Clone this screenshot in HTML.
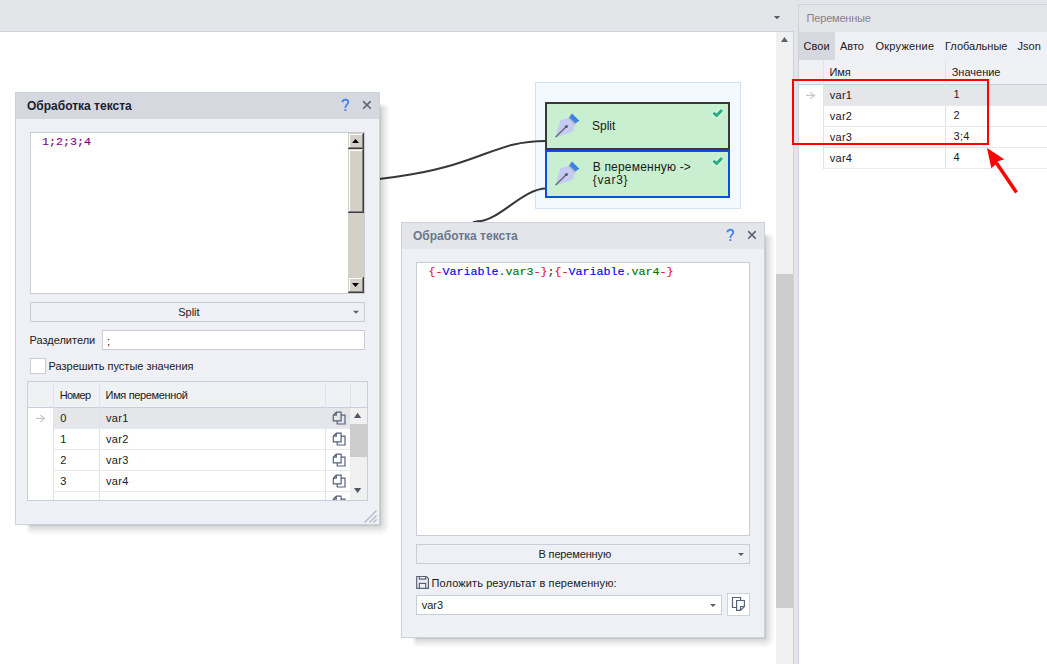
<!DOCTYPE html>
<html><head><meta charset="utf-8">
<style>
*{box-sizing:border-box;margin:0;padding:0}
html,body{width:1047px;height:664px;overflow:hidden}
body{position:relative;background:#e4e5e9;font-family:"Liberation Sans",sans-serif;font-size:11px;color:#202020}
.a{position:absolute}
.t{position:absolute;white-space:nowrap;line-height:1}
.mono{font-family:"Liberation Mono",monospace;font-size:11.67px;-webkit-text-stroke:0.15px}
.btn3d{background:#d4d0c8;box-shadow:inset -1px -1px #404040,inset 1px 1px #d4d0c8,inset -2px -2px #808080,inset 2px 2px #fff}
svg{position:absolute;overflow:visible}
</style></head><body>
<div class="a" style="left:0px;top:31px;width:794px;height:633px;background:#fff;border-top:1px solid #cdd2dc;border-right:1px solid #cdd2dc"></div>
<div class="a" style="left:776px;top:32px;width:17px;height:632px;background:#f0f0f0"></div>
<div class="a" style="left:776px;top:274px;width:17px;height:334px;background:#cccccc"></div>
<svg style="left:0;top:0" width="1" height="1"><path d="M781 42L784.5 37L788 42Z" fill="#5a6070"/><path d="M773.8 16L780.2 16L777 19.3Z" fill="#5a6070"/></svg>
<div class="a" style="left:535px;top:82px;width:206px;height:127px;background:#f3faff;border:1px solid #d2e4f6"></div>
<svg style="left:0;top:0" width="1" height="1"><path d="M250.4 185.3 C484.4 185.3, 472.5 141, 546 141" stroke="#383838" stroke-width="2" fill="none"/><path d="M473 222.2 L478 221.3 C498.5 221.3, 523 188.5, 546 188.5" stroke="#383838" stroke-width="2" fill="none"/></svg>
<div class="a" style="left:545px;top:102px;width:185px;height:48px;background:#c8f0d0;border:2px solid #383838"></div>
<div class="a" style="left:545px;top:150px;width:185px;height:48px;background:#c8f0d0;border:2px solid #0a50dc"></div>
<svg style="left:553px;top:111px" width="30" height="30"><path d="M2.4 26.4 L7.2 9.3 L15.5 7 L22.2 13.8 L19.5 21 Z" fill="#c6cbf0"/>
<path d="M15.8 6.6 L22.4 13.2" stroke="#9aa0b4" stroke-width="1.2"/>
<path d="M16.2 6.2 L19 2.6 L26.4 9.8 L22.6 12.3 Z" fill="#3d7fe8"/>
<path d="M2.6 26.2 L12.8 16" stroke="#50586a" stroke-width="1.1"/>
<circle cx="13.4" cy="15.4" r="1.5" fill="#50586a"/></svg>
<svg style="left:553px;top:159px" width="30" height="30"><path d="M2.4 26.4 L7.2 9.3 L15.5 7 L22.2 13.8 L19.5 21 Z" fill="#c6cbf0"/>
<path d="M15.8 6.6 L22.4 13.2" stroke="#9aa0b4" stroke-width="1.2"/>
<path d="M16.2 6.2 L19 2.6 L26.4 9.8 L22.6 12.3 Z" fill="#3d7fe8"/>
<path d="M2.6 26.2 L12.8 16" stroke="#50586a" stroke-width="1.1"/>
<circle cx="13.4" cy="15.4" r="1.5" fill="#50586a"/></svg>
<div class="t" style="left:592px;top:119.84px;font-size:12px;color:#1a1a1a">Split</div>
<div class="t" style="left:592.7px;top:160.84px;font-size:12px;color:#1a1a1a;letter-spacing:0.2px">В переменную -&gt;</div>
<div class="t" style="left:592.7px;top:174.34px;font-size:12px;color:#1a1a1a;letter-spacing:0.7px">{var3}</div>
<svg style="left:710px;top:106px" width="16" height="14"><path d="M3.4 6.9 L6.6 9.5 L11.9 4.1" stroke="#fff" stroke-opacity=".6" stroke-width="4.8" fill="none"/><path d="M3.4 6.9 L6.6 9.5 L11.9 4.1" stroke="#26ad82" stroke-width="3" fill="none"/></svg>
<svg style="left:710px;top:154px" width="16" height="14"><path d="M3.4 6.9 L6.6 9.5 L11.9 4.1" stroke="#fff" stroke-opacity=".6" stroke-width="4.8" fill="none"/><path d="M3.4 6.9 L6.6 9.5 L11.9 4.1" stroke="#26ad82" stroke-width="3" fill="none"/></svg>
<div class="a" style="left:380px;top:103px;width:10px;height:422px;background:linear-gradient(to right,rgba(0,0,0,.26) 0,rgba(0,0,0,.15) 1.5px,rgba(0,0,0,.12) 3px,rgba(0,0,0,.06) 6px,rgba(0,0,0,0) 10px);-webkit-mask-image:linear-gradient(to bottom,transparent,#000 5px)"></div>
<div class="a" style="left:26px;top:525px;width:354px;height:10px;background:linear-gradient(to bottom,rgba(0,0,0,.26) 0,rgba(0,0,0,.15) 1.5px,rgba(0,0,0,.12) 3px,rgba(0,0,0,.06) 6px,rgba(0,0,0,0) 10px);-webkit-mask-image:linear-gradient(to right,transparent,#000 5px)"></div>
<div class="a" style="left:380px;top:525px;width:10px;height:10px;background:radial-gradient(circle at 0 0,rgba(0,0,0,.2) 0,rgba(0,0,0,.1) 3px,rgba(0,0,0,0) 10px)"></div>
<div class="a" style="left:15px;top:92px;width:365px;height:433px;background:#eff0f5;border:1px solid #ccd1dc"></div>
<div class="a" style="left:16px;top:93px;width:363px;height:26px;background:#d5d8de"></div>
<div class="t" style="left:27px;top:99.84px;font-size:12px;font-weight:bold;color:#1a2030">Обработка текста</div>
<svg style="left:0px;top:0px" width="1" height="1"><path d="M342.3 102.2 C342.7 100.4, 344.1 99.6, 345.4 99.6 C347.1 99.6, 348.3 100.7, 348.3 102.3 C348.3 104.4, 345.6 105, 345.4 107.2 V108" stroke="#3a80f6" stroke-width="1.7" fill="none"/><rect x="344.4" y="109.2" width="2" height="1.7" fill="#3a80f6"/><line x1="363.6" y1="101.6" x2="370.3" y2="108.3" stroke="#5e6676" stroke-width="1.6" stroke-linecap="round"/><line x1="370.3" y1="101.6" x2="363.6" y2="108.3" stroke="#5e6676" stroke-width="1.6" stroke-linecap="round"/></svg>
<div class="a" style="left:30px;top:132px;width:335px;height:162px;background:#fff;border:1px solid #c9cdd8"></div>
<div class="t mono" style="left:42px;top:137.06px;color:#8a008a">1;2;3;4</div>
<div class="a" style="left:348px;top:133px;width:16px;height:160px;background:#d4d0c8"></div>
<div class="a btn3d" style="left:348px;top:133px;width:16px;height:16px"></div>
<div class="a btn3d" style="left:348px;top:149px;width:16px;height:64px"></div>
<div class="a btn3d" style="left:348px;top:277px;width:16px;height:16px"></div>
<svg style="left:0;top:0" width="1" height="1"><path d="M352 143L359 143L355.5 139Z" fill="#000"/><path d="M352 283L359 283L355.5 287Z" fill="#000"/></svg>
<div class="a" style="left:30px;top:302px;width:335px;height:20px;background:#eff0f5;border:1px solid #c9cdd8"></div>
<div class="t" style="left:178.2px;top:306.69px">Split</div>
<svg style="left:0;top:0" width="1" height="1"><path d="M353 310.8L359 310.8L356 313.8Z" fill="#5a6070"/></svg>
<div class="t" style="left:29.5px;top:335.19px">Разделители</div>
<div class="a" style="left:102px;top:330px;width:263px;height:20px;background:#fff;border:1px solid #c9cdd8"></div>
<div class="t" style="left:107px;top:336.19px">;</div>
<div class="a" style="left:30px;top:358px;width:16px;height:16px;background:#fff;border:1px solid #c9cdd8"></div>
<div class="t" style="left:48.5px;top:360.69px">Разрешить пустые значения</div>
<div class="a" style="left:27px;top:381px;width:341px;height:120px;background:#fff;border:1px solid #c9cfda"></div>
<div class="a" style="left:28px;top:382px;width:339px;height:25px;background:#eff1f5"></div>
<div class="a" style="left:28px;top:407px;width:339px;height:1px;background:#c9cfda"></div>
<div class="a" style="left:54px;top:408px;width:296px;height:20px;background:#e4e6ea"></div>
<div class="a" style="left:53px;top:383px;width:1px;height:117px;background:#dfe2e8"></div>
<div class="a" style="left:99px;top:383px;width:1px;height:117px;background:#dfe2e8"></div>
<div class="a" style="left:325px;top:383px;width:1px;height:117px;background:#dfe2e8"></div>
<div class="a" style="left:350px;top:383px;width:1px;height:24px;background:#dfe2e8"></div>
<div class="a" style="left:54px;top:428px;width:296px;height:1px;background:#e6e9ee"></div>
<div class="a" style="left:54px;top:449px;width:296px;height:1px;background:#e6e9ee"></div>
<div class="a" style="left:54px;top:470px;width:296px;height:1px;background:#e6e9ee"></div>
<div class="a" style="left:54px;top:491px;width:296px;height:1px;background:#e6e9ee"></div>
<div class="t" style="left:59.7px;top:389.69px;letter-spacing:-0.6px">Номер</div>
<div class="t" style="left:105.6px;top:389.69px;letter-spacing:-0.35px">Имя переменной</div>
<svg style="left:34px;top:412px" width="14" height="12"><path d="M2 6.4H10.8M6.2 3.2L10.5 6.4L6.2 9.8" stroke="#c4c7cd" stroke-width="1.1" fill="none"/></svg>
<div class="t" style="left:60.3px;top:412.69px">0</div>
<div class="t" style="left:106px;top:412.69px;letter-spacing:0.3px">var1</div>
<div class="t" style="left:60.3px;top:433.69px">1</div>
<div class="t" style="left:106px;top:433.69px;letter-spacing:0.3px">var2</div>
<div class="t" style="left:60.3px;top:454.69px">2</div>
<div class="t" style="left:106px;top:454.69px;letter-spacing:0.3px">var3</div>
<div class="t" style="left:60.3px;top:475.69px">3</div>
<div class="t" style="left:106px;top:475.69px;letter-spacing:0.3px">var4</div>
<div class="a" style="left:350px;top:408px;width:17px;height:92px;background:#f0f0f0"></div>
<div class="a" style="left:350px;top:424px;width:17px;height:33px;background:#cccccc"></div>
<svg style="left:0;top:0" width="1" height="1"><path d="M354 418L361.2 418L357.6 412.8Z" fill="#505868"/><path d="M354 488L361.2 488L357.6 493Z" fill="#505868"/></svg>
<div class="a" style="left:326px;top:408px;width:24px;height:92px;overflow:hidden"><svg style="left:0;top:0" width="24" height="110"><g transform="translate(0,0)"><path d="M7.3 7.2 L10.3 4.2 H15.1 V12.8 H7.3 Z M10.3 4.2 V7.2 H7.3 M15.1 7.2 H19 V16 H11.2 V12.8" stroke="#566278" stroke-width="1.2" fill="none"/></g><g transform="translate(0,21)"><path d="M7.3 7.2 L10.3 4.2 H15.1 V12.8 H7.3 Z M10.3 4.2 V7.2 H7.3 M15.1 7.2 H19 V16 H11.2 V12.8" stroke="#566278" stroke-width="1.2" fill="none"/></g><g transform="translate(0,42)"><path d="M7.3 7.2 L10.3 4.2 H15.1 V12.8 H7.3 Z M10.3 4.2 V7.2 H7.3 M15.1 7.2 H19 V16 H11.2 V12.8" stroke="#566278" stroke-width="1.2" fill="none"/></g><g transform="translate(0,63)"><path d="M7.3 7.2 L10.3 4.2 H15.1 V12.8 H7.3 Z M10.3 4.2 V7.2 H7.3 M15.1 7.2 H19 V16 H11.2 V12.8" stroke="#566278" stroke-width="1.2" fill="none"/></g><g transform="translate(0,84)"><path d="M7.3 7.2 L10.3 4.2 H15.1 V12.8 H7.3 Z M10.3 4.2 V7.2 H7.3 M15.1 7.2 H19 V16 H11.2 V12.8" stroke="#566278" stroke-width="1.2" fill="none"/></g></svg></div>
<svg style="left:0;top:0" width="1" height="1"><path d="M364.5 522.5L376.5 510.5M369.5 522.5L376.5 515.5M373.5 522.5L376.5 519.5" stroke="#b4b8c0" stroke-width="1.3"/></svg>
<div class="a" style="left:765px;top:233px;width:10px;height:405px;background:linear-gradient(to right,rgba(0,0,0,.26) 0,rgba(0,0,0,.15) 1.5px,rgba(0,0,0,.12) 3px,rgba(0,0,0,.06) 6px,rgba(0,0,0,0) 10px);-webkit-mask-image:linear-gradient(to bottom,transparent,#000 5px)"></div>
<div class="a" style="left:412px;top:638px;width:353px;height:10px;background:linear-gradient(to bottom,rgba(0,0,0,.26) 0,rgba(0,0,0,.15) 1.5px,rgba(0,0,0,.12) 3px,rgba(0,0,0,.06) 6px,rgba(0,0,0,0) 10px);-webkit-mask-image:linear-gradient(to right,transparent,#000 5px)"></div>
<div class="a" style="left:765px;top:638px;width:10px;height:10px;background:radial-gradient(circle at 0 0,rgba(0,0,0,.2) 0,rgba(0,0,0,.1) 3px,rgba(0,0,0,0) 10px)"></div>
<div class="a" style="left:401px;top:222px;width:364px;height:416px;background:#eff0f5;border:1px solid #ccd1dc"></div>
<div class="a" style="left:402px;top:223px;width:362px;height:26px;background:#e4e5ea"></div>
<div class="t" style="left:413px;top:229.84px;font-size:12px;font-weight:bold;color:#6a778c">Обработка текста</div>
<svg style="left:385px;top:130px" width="1" height="1"><path d="M342.3 102.2 C342.7 100.4, 344.1 99.6, 345.4 99.6 C347.1 99.6, 348.3 100.7, 348.3 102.3 C348.3 104.4, 345.6 105, 345.4 107.2 V108" stroke="#3a80f6" stroke-width="1.7" fill="none"/><rect x="344.4" y="109.2" width="2" height="1.7" fill="#3a80f6"/><line x1="363.6" y1="101.6" x2="370.3" y2="108.3" stroke="#5a6272" stroke-width="1.6" stroke-linecap="round"/><line x1="370.3" y1="101.6" x2="363.6" y2="108.3" stroke="#5a6272" stroke-width="1.6" stroke-linecap="round"/></svg>
<div class="a" style="left:416px;top:262px;width:334px;height:274px;background:#fff;border:1px solid #c9cdd8"></div>
<div class="t mono" style="left:428.5px;top:267.06px"><span style="color:#f0103c">{-</span><span style="color:#0000ff">Variable</span><span style="color:#2a7070">.</span><span style="color:#007800">var3</span><span style="color:#f0103c">-}</span><span style="color:#303030">;</span><span style="color:#f0103c">{-</span><span style="color:#0000ff">Variable</span><span style="color:#2a7070">.</span><span style="color:#007800">var4</span><span style="color:#f0103c">-}</span></div>
<div class="a" style="left:416px;top:544px;width:334px;height:20px;background:#eff0f5;border:1px solid #c9cdd8"></div>
<div class="t" style="left:538.5px;top:548.69px;letter-spacing:-0.15px">В переменную</div>
<svg style="left:0;top:0" width="1" height="1"><path d="M738 553L744 553L741 556Z" fill="#5a6070"/></svg>
<svg style="left:415px;top:575px" width="16" height="16"><g fill="none" stroke="#5a6478" stroke-width="1.2"><path d="M1.7 1.5H11.4L13.4 3.5V13.4H1.7Z"/><path d="M4.4 1.5V4.2H10.7V1.5"/><path d="M4.4 13.4V8.4H10.7V13.4"/></g></svg>
<div class="t" style="left:431.6px;top:577.69px;letter-spacing:0.1px">Положить результат в переменную:</div>
<div class="a" style="left:416px;top:595px;width:306px;height:20px;background:#fff;border:1px solid #c9cdd8"></div>
<div class="t" style="left:421.7px;top:599.69px">var3</div>
<svg style="left:0;top:0" width="1" height="1"><path d="M710 604L716 604L713 607Z" fill="#5a6070"/></svg>
<div class="a" style="left:727px;top:593px;width:23px;height:23px;background:#fff;border:1px solid #cdd2dc"></div>
<svg style="left:727px;top:593px" width="23" height="23"><g fill="none" stroke="#566278" stroke-width="1.2"><path d="M9.6 14.5H5.5V4.5H13.6V7.5"/><path d="M9.6 7.5H17.4V13.5L13.5 17.4H9.6Z M13.5 17.4V13.5H17.4"/></g></svg>
<div class="a" style="left:798px;top:4px;width:249px;height:660px;background:#fff;border-left:1px solid #cdd2dc;border-top:1px solid #cdd2dc"></div>
<div class="a" style="left:799px;top:5px;width:248px;height:27px;background:#e4e5e9"></div>
<div class="t" style="left:806.6px;top:12.69px;color:#8a8088;letter-spacing:-0.2px">Переменные</div>
<div class="a" style="left:799px;top:32px;width:248px;height:28px;background:#eff0f5"></div>
<div class="a" style="left:799px;top:32px;width:36px;height:28px;background:#d5d8de"></div>
<div class="t" style="left:803.6px;top:40.69px">Свои</div>
<div class="t" style="left:840px;top:40.69px">Авто</div>
<div class="t" style="left:875.6px;top:40.69px;letter-spacing:0.2px">Окружение</div>
<div class="t" style="left:945px;top:40.69px">Глобальные</div>
<div class="t" style="left:1017.6px;top:40.69px">Json</div>
<div class="a" style="left:799px;top:60px;width:248px;height:24px;background:#eff1f5"></div>
<div class="a" style="left:799px;top:84px;width:248px;height:1px;background:#c9cfda"></div>
<div class="a" style="left:823px;top:60px;width:1px;height:109px;background:#dfe2e8"></div>
<div class="a" style="left:945px;top:60px;width:1px;height:109px;background:#dfe2e8"></div>
<div class="t" style="left:829.4px;top:67.19px">Имя</div>
<div class="t" style="left:951.7px;top:67.19px">Значение</div>
<div class="a" style="left:824px;top:85px;width:223px;height:20px;background:#e4e6ea"></div>
<div class="a" style="left:824px;top:105px;width:223px;height:1px;background:#e6e9ee"></div>
<div class="a" style="left:824px;top:126px;width:223px;height:1px;background:#e6e9ee"></div>
<div class="a" style="left:824px;top:147px;width:223px;height:1px;background:#e6e9ee"></div>
<div class="a" style="left:824px;top:168px;width:223px;height:1px;background:#e6e9ee"></div>
<svg style="left:804px;top:89px" width="14" height="12"><path d="M2 6.4H10.8M6.2 3.2L10.5 6.4L6.2 9.8" stroke="#c4c7cd" stroke-width="1.1" fill="none"/></svg>
<div class="t" style="left:829.7px;top:89.69px;letter-spacing:0.3px">var1</div>
<div class="t" style="left:953.6px;top:88.69px;letter-spacing:0.3px">1</div>
<div class="t" style="left:829.7px;top:110.69px;letter-spacing:0.3px">var2</div>
<div class="t" style="left:953.6px;top:109.69px;letter-spacing:0.3px">2</div>
<div class="t" style="left:829.7px;top:131.69px;letter-spacing:0.3px">var3</div>
<div class="t" style="left:953.6px;top:130.69px;letter-spacing:0.3px">3;4</div>
<div class="t" style="left:829.7px;top:152.69px;letter-spacing:0.3px">var4</div>
<div class="t" style="left:953.6px;top:151.69px;letter-spacing:0.3px">4</div>
<div class="a" style="left:792px;top:79px;width:197px;height:66px;background:transparent;border:2px solid #f00"></div>
<svg style="left:0;top:0" width="1" height="1"><path d="M1016.5 192.5 L996.5 163" stroke="#f00" stroke-width="3.5"/><path d="M987 148 L1004.2 159.3 L998.3 161.2 L995.5 164.5 L991.3 168.2Z" fill="#f00"/></svg>
</body></html>
